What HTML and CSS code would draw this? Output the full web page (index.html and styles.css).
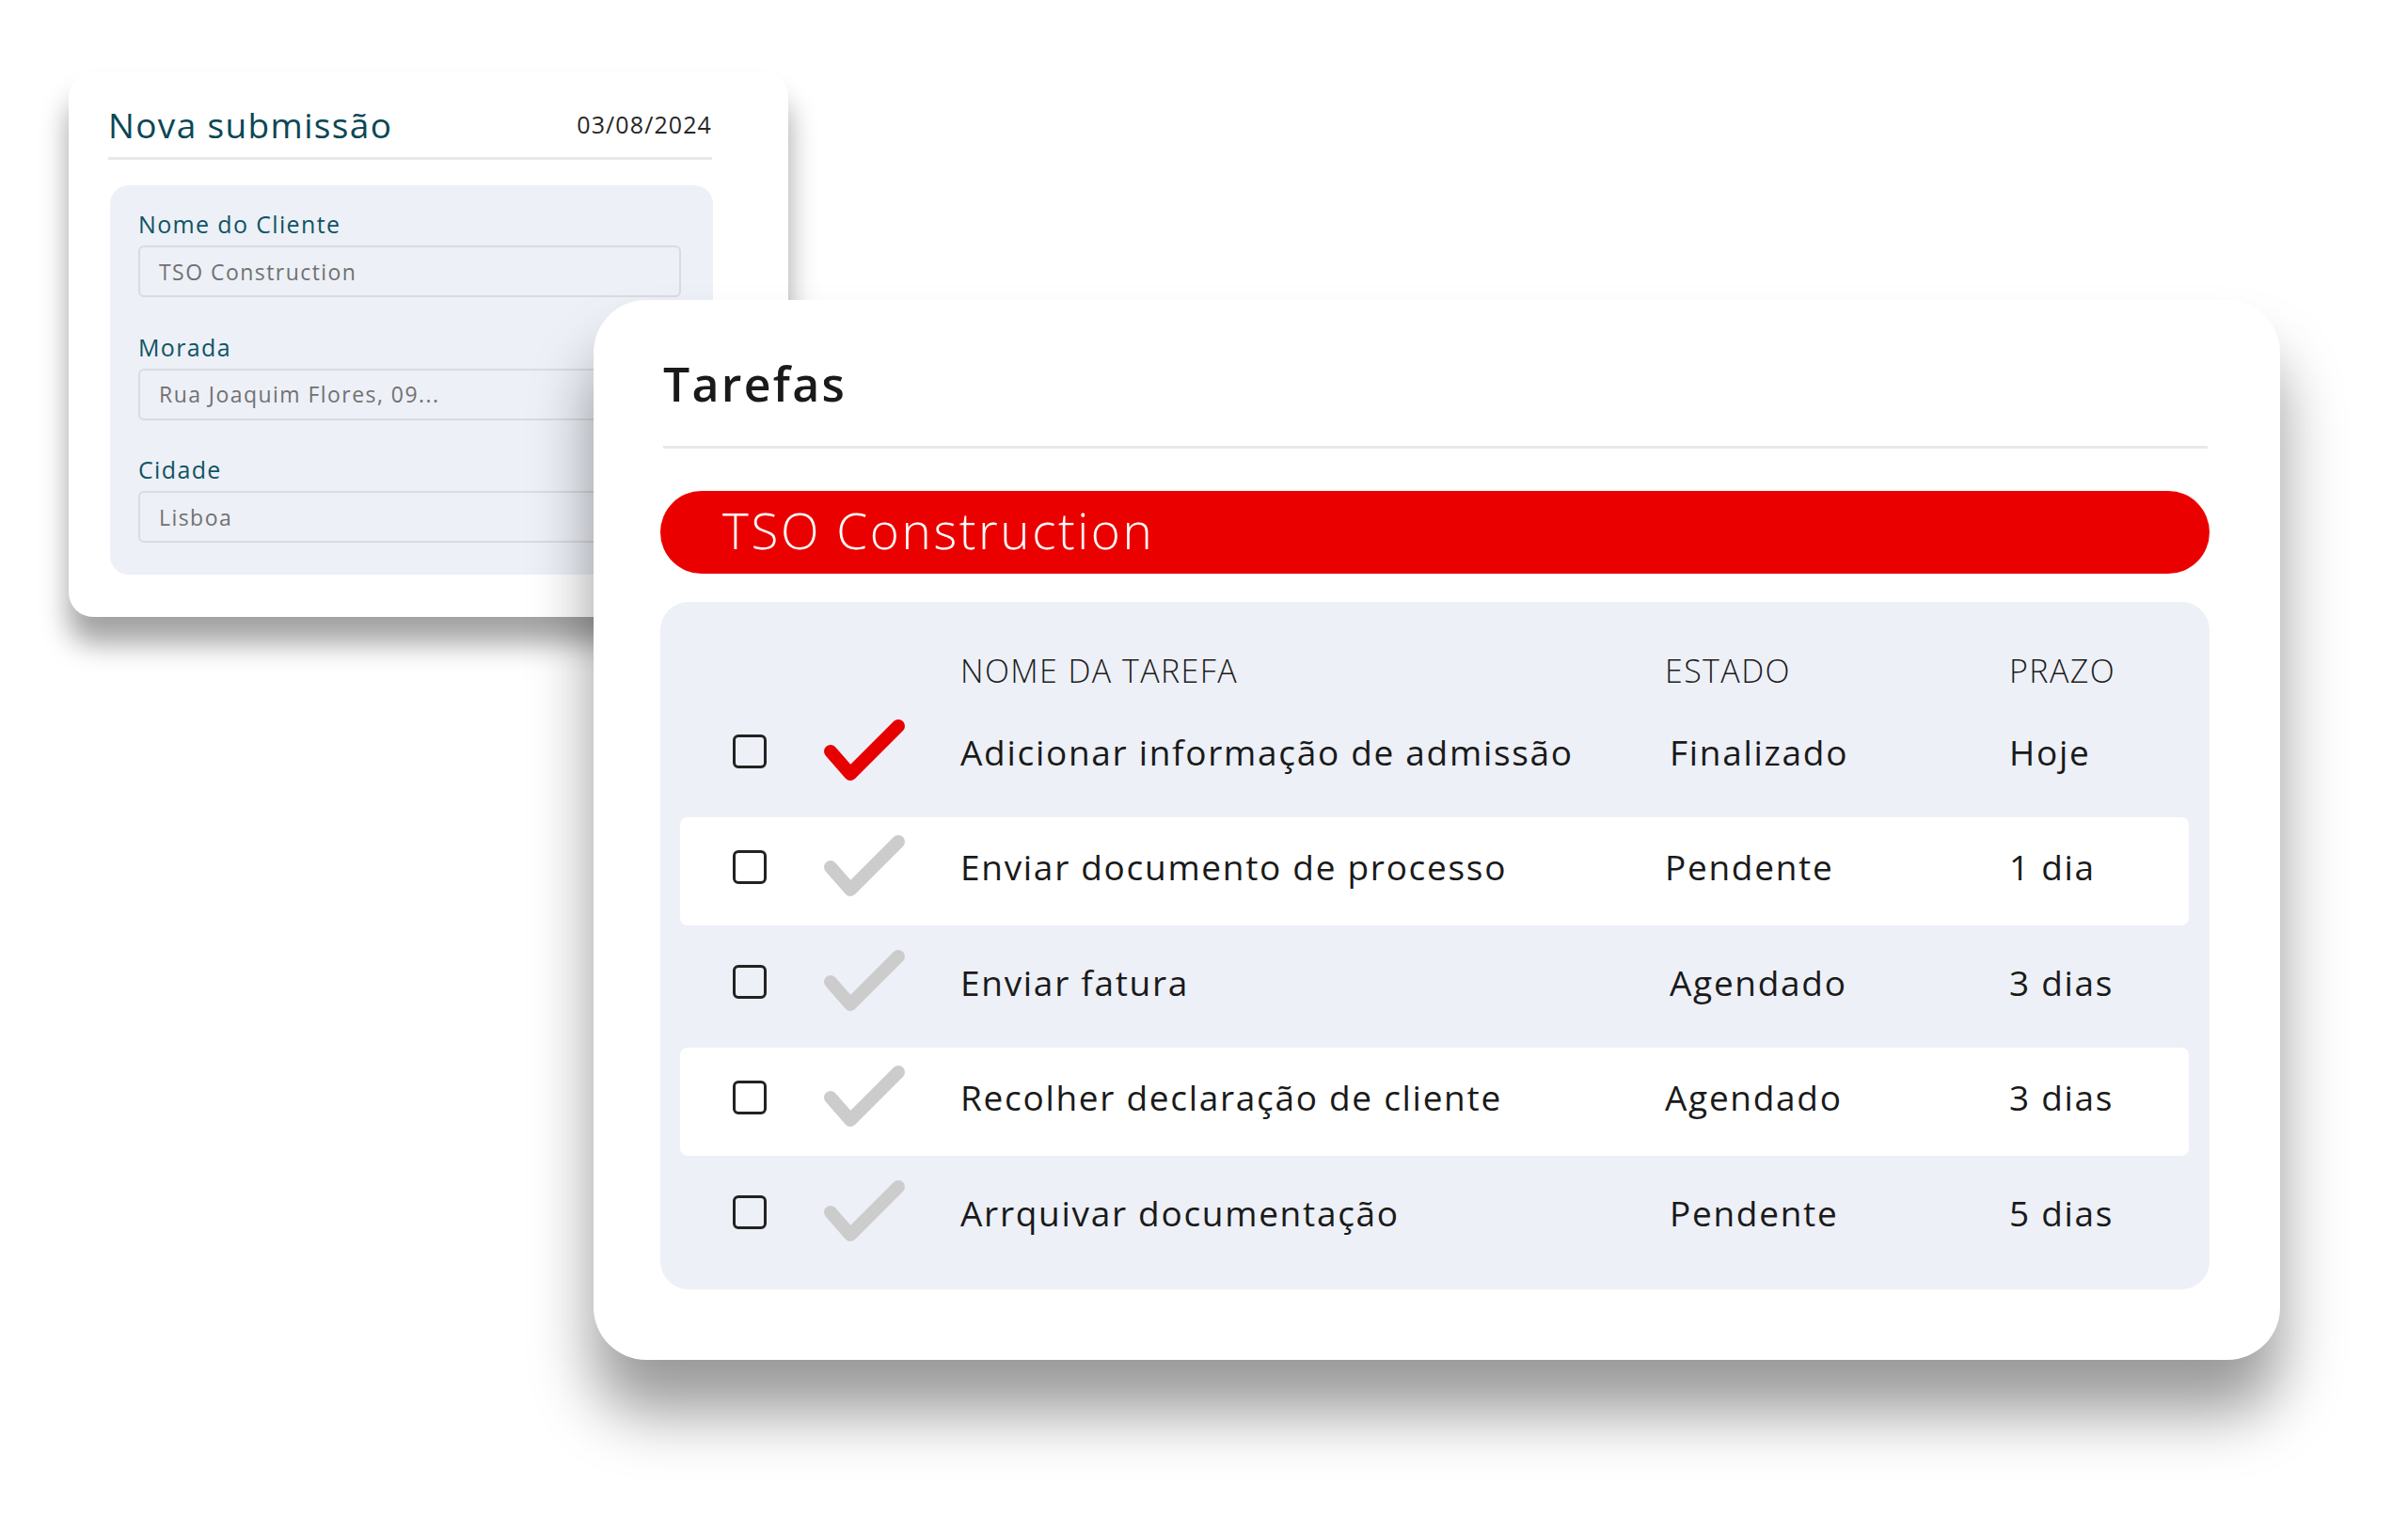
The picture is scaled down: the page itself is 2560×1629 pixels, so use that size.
FILE: index.html
```html
<!DOCTYPE html>
<html lang="pt">
<head>
<meta charset="utf-8">
<title>Tarefas</title>
<link rel="stylesheet" href="styles.css">
</head>
<body>
<div class="stage">
  <section class="card card-back">
    <header class="back-head">
      <h2 class="back-title">Nova submissão</h2>
      <span class="back-date">03/08/2024</span>
    </header>
    <div class="form">
      <div class="field">
        <span class="label">Nome do Cliente</span>
        <div class="input">TSO Construction</div>
      </div>
      <div class="field">
        <span class="label">Morada</span>
        <div class="input">Rua Joaquim Flores, 09...</div>
      </div>
      <div class="field">
        <span class="label">Cidade</span>
        <div class="input">Lisboa</div>
      </div>
    </div>
  </section>

  <section class="card card-front">
    <header class="front-head">
      <h1 class="front-title">Tarefas</h1>
    </header>
    <div class="client-bar">TSO Construction</div>
    <div class="tasks">
      <div class="row thead">
        <span></span><span></span>
        <span>NOME DA TAREFA</span>
        <span>ESTADO</span>
        <span>PRAZO</span>
      </div>
      <div class="tbody">
        <div class="row trow">
          <span class="box"></span>
          <svg class="tick" viewBox="0 0 92 74"><path d="M10 37 L31 61 L82 10" class="tick-red"/></svg>
          <span>Adicionar informação de admissão</span>
          <span class="shift">Finalizado</span>
          <span>Hoje</span>
        </div>
        <div class="row trow alt">
          <span class="box"></span>
          <svg class="tick" viewBox="0 0 92 74"><path d="M10 37 L31 61 L82 10" class="tick-gray"/></svg>
          <span>Enviar documento de processo</span>
          <span>Pendente</span>
          <span>1 dia</span>
        </div>
        <div class="row trow">
          <span class="box"></span>
          <svg class="tick" viewBox="0 0 92 74"><path d="M10 37 L31 61 L82 10" class="tick-gray"/></svg>
          <span>Enviar fatura</span>
          <span class="shift">Agendado</span>
          <span>3 dias</span>
        </div>
        <div class="row trow alt">
          <span class="box"></span>
          <svg class="tick" viewBox="0 0 92 74"><path d="M10 37 L31 61 L82 10" class="tick-gray"/></svg>
          <span>Recolher declaração de cliente</span>
          <span>Agendado</span>
          <span>3 dias</span>
        </div>
        <div class="row trow">
          <span class="box"></span>
          <svg class="tick" viewBox="0 0 92 74"><path d="M10 37 L31 61 L82 10" class="tick-gray"/></svg>
          <span>Arrquivar documentação</span>
          <span class="shift">Pendente</span>
          <span>5 dias</span>
        </div>
      </div>
    </div>
  </section>
</div>
</body>
</html>
```

FILE: styles.css
```css
* { box-sizing: border-box; }
html, body { margin: 0; background: #ffffff; }
body {
  font-family: "Open Sans", "Liberation Sans", sans-serif;
  color: #1a1a1a;
}
.stage {
  position: relative;
  width: 2560px;
  height: 1629px;
  overflow: hidden;
  background: #ffffff;
}
.card {
  position: absolute;
  background: #ffffff;
}

/* Back card */
.card-back {
  left: 73px;
  top: 77px;
  width: 765px;
  height: 579px;
  padding: 0 81px 0 42px;
  border-radius: 26px;
  box-shadow: 0 28px 30px rgba(0, 0, 0, 0.37);
}
.back-head {
  height: 93px;
  padding-top: 37px;
  display: flex;
  justify-content: space-between;
  align-items: flex-start;
  border-bottom: 3px solid #e9e9ea;
}
.back-title {
  margin: 0;
  font-size: 37px;
  line-height: 37px;
  font-weight: 500;
  color: #0b4756;
  letter-spacing: 1.35px;
}
.back-date {
  font-size: 25px;
  line-height: 37px;
  color: #262626;
  letter-spacing: 1.1px;
}
.form {
  margin: 27px -1px 0 2px;
  background: #edf0f7;
  border-radius: 20px;
  padding: 29px 34px 34px 30px;
  display: flex;
  flex-direction: column;
  gap: 40.5px;
}
.field {
  display: flex;
  flex-direction: column;
  gap: 10px;
}
.label {
  font-size: 25px;
  line-height: 25px;
  color: #0e5464;
  letter-spacing: 1.35px;
}
.input {
  height: 55px;
  border: 2px solid #dadbe0;
  border-radius: 6px;
  padding-left: 20px;
  display: flex;
  align-items: center;
  font-size: 23px;
  color: #717171;
  letter-spacing: 1.45px;
  white-space: nowrap;
}

/* Front card */
.card-front {
  left: 631px;
  top: 319px;
  width: 1793px;
  height: 1127px;
  padding: 0 75px 0 71px;
  border-radius: 56px;
  box-shadow: 0 56px 66px rgba(0, 0, 0, 0.4);
}
.front-head {
  height: 158px;
  margin: 0 2px 0 3px;
  padding-top: 64px;
  border-bottom: 3px solid #e8e8e8;
}
.front-title {
  margin: 0;
  font-size: 50px;
  line-height: 1;
  font-weight: 600;
  color: #1a1a1a;
  letter-spacing: 2.3px;
}
.client-bar {
  margin-top: 45px;
  height: 88px;
  border-radius: 44px;
  background: #eb0000;
  color: #ffffff;
  display: flex;
  align-items: center;
  padding: 0 0 6px 66px;
  font-size: 53px;
  font-weight: 300;
  letter-spacing: 2.6px;
}
.tasks {
  margin-top: 30px;
  background: #edf0f7;
  border-radius: 30px;
  padding: 40px 22px 20px 21px;
}
.tbody {
  display: flex;
  flex-direction: column;
  gap: 7.5px;
}
.row {
  display: grid;
  grid-template-columns: 94px 148px 749px 366px 1fr;
  align-items: center;
  padding-left: 56px;
  white-space: nowrap;
}
.thead {
  height: 66px;
  font-size: 34px;
  font-weight: 300;
  letter-spacing: 1.4px;
  color: #1c1c1c;
}
.trow {
  height: 115px;
  padding-bottom: 9px;
  font-size: 37px;
  letter-spacing: 1.7px;
  color: #1a1a1a;
  border-radius: 8px;
}
.trow.alt { background: #ffffff; }
.box {
  width: 36px;
  height: 36px;
  border: 3px solid #222222;
  border-radius: 6px;
}
.tick {
  display: block;
  width: 92px;
  height: 74px;
}
.tick path {
  fill: none;
  stroke-width: 14;
  stroke-linecap: round;
  stroke-linejoin: round;
}
.tick-red { stroke: #e60000; }
.tick-gray { stroke: #cccccc; }
.shift { padding-left: 5px; }
```
